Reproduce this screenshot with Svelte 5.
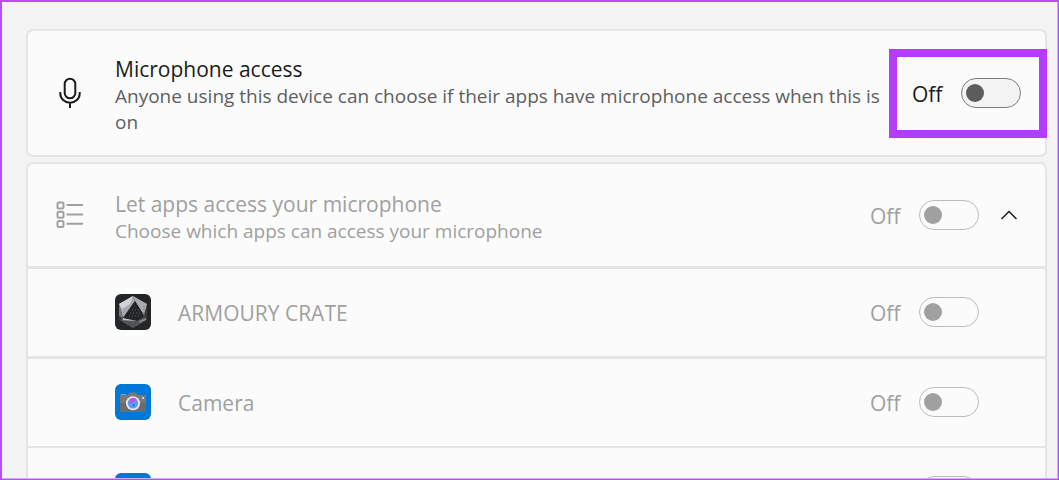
<script lang="ts">
  let micAccess = $state(false);
  let appAccess = $state(false);
  let expanded = $state(true);

  let apps = $state([
    { id: 'armoury', name: 'ARMOURY CRATE', on: false },
    { id: 'camera', name: 'Camera', on: false },
    { id: 'next', name: '', on: false }
  ]);
</script>

{#snippet cameraIcon()}
  <svg class="app-icon" viewBox="0 0 36 36" aria-hidden="true">
    <rect width="36" height="36" rx="6" fill="#0078d7" />
    <path d="M6 10h5v2H6z" fill="#6fa3dc" />
    <path d="M5 11h8l1.500-2.500h6.500L22.500 11H31v17H5z" fill="#77787a" />
    <path d="M5 19h26v9H5z" fill="#6a6c6e" />
    <rect x="27" y="13" width="2" height="2" fill="#c9cdd1" />
    <circle cx="18" cy="19.300" r="7" fill="#e9eaee" />
    <circle cx="18" cy="19.300" r="5.200" fill="#5b9bf5" />
    <path d="M13.500 17.500a5 5 0 0 1 8-2.500l-3 3.500-4 1z" fill="#b45be8" />
    <path d="M17 20l3 1-1 2z" fill="#2f62d8" />
  </svg>
{/snippet}

<div class="frame">
  <main class="page">
    <section class="card">
      <div class="row access">
        <svg class="row-icon dark" viewBox="0 0 28 32" aria-hidden="true">
          <rect x="8.700" y="1.700" width="10.600" height="19.600" rx="5.300" />
          <path d="M4.300 15v1.500a9.700 9.200 0 0 0 19.400 0V15M14 25.700V31" />
        </svg>
        <div class="copy">
          <label class="title" for="mic-access">Microphone access</label>
          <p>Anyone using this device can choose if their apps have microphone access when this is on</p>
        </div>
        <div class="control highlighted">
          <span>{micAccess ? 'On' : 'Off'}</span>
          <input id="mic-access" type="checkbox" role="switch" bind:checked={micAccess} />
        </div>
      </div>
    </section>

    <section class="card">
      <div class="row header muted">
        <svg class="row-icon" viewBox="0 0 28 32" aria-hidden="true">
          <rect x="1.500" y="3.500" width="6" height="6" rx="1.500" />
          <rect x="1.500" y="12.800" width="6" height="6" rx="1.500" />
          <rect x="1.500" y="22" width="6" height="6" rx="1.500" />
          <path d="M10.500 6H27M10.500 15.500H27M10.500 24.800H27" />
        </svg>
        <div class="copy">
          <label class="title" for="app-access">Let apps access your microphone</label>
          <p>Choose which apps can access your microphone</p>
        </div>
        <div class="control">
          <span>{appAccess ? 'On' : 'Off'}</span>
          <input id="app-access" type="checkbox" role="switch" disabled bind:checked={appAccess} />
        </div>
        <button
          class="chevron"
          type="button"
          aria-label="Show apps"
          aria-expanded={expanded}
          onclick={() => (expanded = !expanded)}
        >
          <svg class:closed={!expanded} viewBox="0 0 18 18" aria-hidden="true">
            <path d="M1.500 13L9 5.500l7.500 7.500" />
          </svg>
        </button>
      </div>

      {#if expanded}
        <ul>
          {#each apps as app (app.id)}
            <li class="row app muted">
              {#if app.id === 'armoury'}
                <svg class="app-icon" viewBox="0 0 36 36" aria-hidden="true">
                  <rect width="36" height="36" rx="6" fill="#232527" />
                  <path d="M18 2l14 8v16l-14 8L4 26V10z" fill="#3a3c3e" />
                  <path d="M18 2l14 8-3 11L20 7z" fill="#a9abad" />
                  <path d="M18 2l2 5-12 17-4-14z" fill="#a5a8ad" />
                  <path d="M4 10l14-8-3 8-8 5z" fill="#d2d3d4" />
                  <path d="M4 10l4 14-4-2z" fill="#77797b" />
                  <path d="M8 24l12 1 2 2-15 0z" fill="#c4c5c6" />
                  <path d="M20 7l9 15-7 5-14-3z" fill="#222426" />
                  <path d="M5 26l17 1 8-4v4l-12 7z" fill="#505254" />
                  <path d="M24 29l7-3v-2l-7 3z" fill="#858789" />
                  <path
                    d="M15 19h10M14 22h12M17 16h7M9 29h16M12 31h11M29 12v13"
                    fill="none"
                    stroke="#5c5e60"
                    stroke-dasharray="1 2"
                  />
                </svg>
              {:else}
                {@render cameraIcon()}
              {/if}
              <label class="name" for={app.id}>{app.name}</label>
              <div class="control">
                {#if app.name}
                  <span>{app.on ? 'On' : 'Off'}</span>
                {/if}
                <input id={app.id} type="checkbox" role="switch" disabled bind:checked={app.on} />
              </div>
            </li>
          {/each}
        </ul>
      {/if}
    </section>
  </main>
</div>

<style>
  :global(body) {
    margin: 0;
    background: #f3f3f3;
  }

  .frame {
    box-sizing: border-box;
    height: 100vh;
    overflow: hidden;
    border: solid #b84dff;
    border-width: 2px 1px 1px 2px;
    font-family: 'Open Sans', 'Segoe UI', sans-serif;
    color: #1b1b1b;
  }

  .page {
    box-sizing: border-box;
    height: 100%;
    overflow: hidden;
    display: flex;
    flex-direction: column;
    gap: 5px;
    padding: 27px 10px 0 24px;
    border: solid #dba8ff;
    border-width: 0 1px 1px 0;
    background: #f3f3f3;
  }

  .card {
    flex-shrink: 0;
    border: 2px solid #e5e5e5;
    border-radius: 7px;
    background: #fbfbfb;
  }

  .row {
    display: flex;
    align-items: center;
    box-sizing: border-box;
    padding-left: 28px;
  }

  .access {
    min-height: 124px;
    padding-right: 24px;
  }

  .header {
    min-height: 102px;
    padding-right: 27px;
  }

  .app {
    min-height: 90px;
    padding: 0 66px 2px 87px;
    border-top: 3px solid #e5e5e5;
  }

  .app:last-child {
    border-top-width: 2px;
  }

  .row-icon {
    flex: none;
    width: 28px;
    height: 32px;
    margin-right: 31px;
    fill: none;
    stroke: #a0a0a0;
    stroke-width: 2;
  }

  .row-icon.dark {
    stroke: #1b1b1b;
  }

  .app-icon {
    flex: none;
    width: 36px;
    height: 36px;
    margin-right: 27px;
  }

  .copy {
    flex: 1;
    min-width: 0;
    margin-right: 30px;
    padding-top: 4px;
  }

  .title {
    display: block;
    font-size: 21px;
    line-height: 28px;
  }

  p {
    margin: 0;
    font-size: 19px;
    line-height: 26px;
    color: #5f5f5f;
  }

  .name {
    flex: 1;
    padding-top: 2px;
    font-size: 21px;
    line-height: 28px;
  }

  .muted,
  .muted p {
    color: #a0a0a0;
  }

  ul {
    margin: 0;
    padding: 0;
    list-style: none;
  }

  .control {
    flex: none;
    display: flex;
    align-items: center;
    width: 109px;
    font-size: 21px;
    line-height: 28px;
  }

  .control span {
    padding-top: 2px;
  }

  .highlighted {
    position: relative;
  }

  .highlighted::after {
    content: '';
    position: absolute;
    inset: -29px -26px -30px -23px;
    border: 8px solid #b43cff;
    pointer-events: none;
  }

  input {
    appearance: none;
    box-sizing: border-box;
    display: flex;
    align-items: center;
    width: 60px;
    height: 30px;
    margin: 0 0 0 auto;
    padding: 0 4px;
    border: 1px solid #7c7c7c;
    border-radius: 15px;
    background: #f3f3f3;
  }

  input::before {
    content: '';
    width: 18px;
    height: 18px;
    border-radius: 50%;
    background: #5c5c5c;
  }

  input:checked {
    justify-content: flex-end;
  }

  input:disabled {
    border-color: #bcbcbc;
    background: #fbfbfb;
  }

  input:disabled::before {
    background: #a0a0a0;
  }

  .chevron {
    flex: none;
    width: 18px;
    height: 18px;
    margin-left: 21px;
    padding: 0;
    border: 0;
    background: none;
  }

  .chevron svg {
    display: block;
    fill: none;
    stroke: #1b1b1b;
    stroke-width: 1.5;
  }

  .closed {
    transform: rotate(180deg);
  }
</style>
